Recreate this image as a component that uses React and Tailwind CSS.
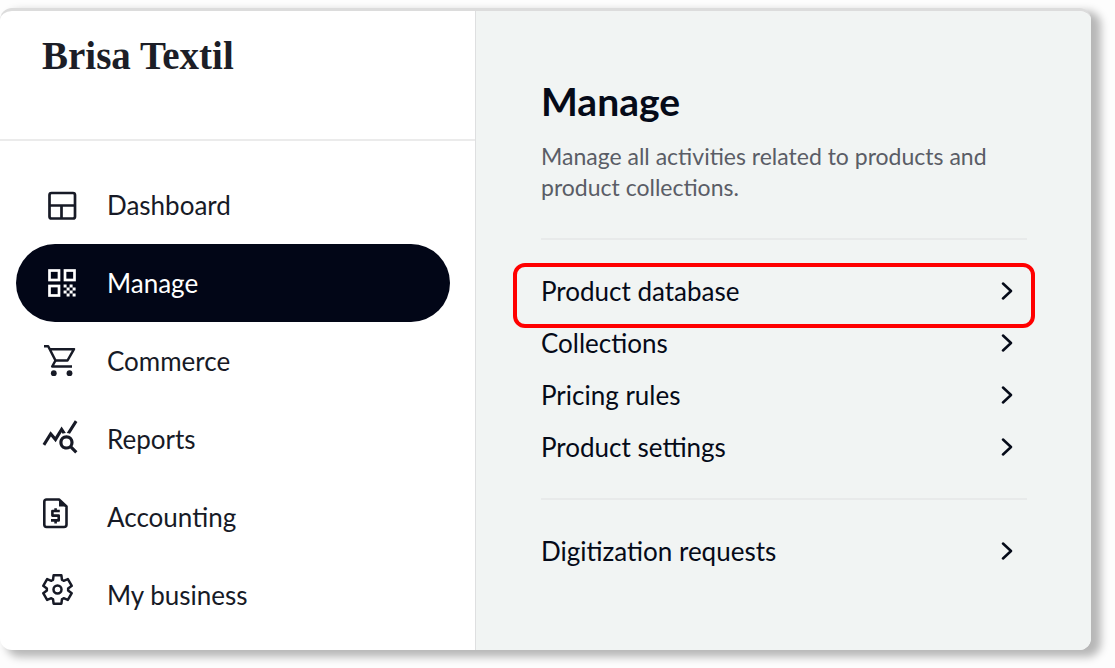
import React, { useState } from "react";
import { MdQueryStats } from "react-icons/md";

const DashboardIcon = () => (
  <g fill="none" stroke="currentColor" strokeWidth="2.7">
    <rect x="9.5" y="8" width="25.5" height="25.5" rx="2" />
    <path d="M9.5 20.5H35M21.5 20.5V33.5" />
  </g>
);

const ManageIcon = () => (
  <g>
    <g fill="none" stroke="currentColor" strokeWidth="2.7">
      <rect x="9.5" y="7.5" width="9.5" height="9.5" />
      <rect x="25" y="7.5" width="9.5" height="9.5" />
      <rect x="9.5" y="23" width="9.5" height="9.5" />
    </g>
    <path
      fill="currentColor"
      d="M23.6 21.6h3v3h-3zM29.6 21.6h3v3h-3zM26.6 24.6h3v3h-3zM32.6 24.6h3v3h-3zM23.6 27.6h3v3h-3zM29.6 27.6h3v3h-3zM26.6 30.6h3v3h-3zM32.6 30.6h3v3h-3z"
    />
  </g>
);

const CommerceIcon = () => (
  <g fill="none" stroke="currentColor" strokeWidth="2.5" strokeLinejoin="round">
    <path d="M4 5.2H8.2L15.5 19.5H27.5L34 8.2H9.8" />
    <path d="M15.5 19.5L12.2 25.5H32" />
    <circle cx="13.8" cy="32.2" r="2.9" fill="currentColor" stroke="none" />
    <circle cx="29.5" cy="32.2" r="2.9" fill="currentColor" stroke="none" />
  </g>
);

const ReportsIcon = () => <MdQueryStats x="1" y="-2" size="38" />;

const AccountingIcon = () => (
  <g fill="none" stroke="currentColor" strokeWidth="2.6" strokeLinejoin="round">
    <path d="M6.5 2.5H19L26.5 9.5V27.5Q26.5 30 24 30H6.5Q4.3 30 4.3 27.5V4.7Q4.3 2.5 6.5 2.5Z" />
    <path d="M19 2.5V9.5H26.5Z" fill="currentColor" stroke="none" />
    <path d="M19.8 14H12.4V18.6H18.7V23.4H11M15.6 11.2V14M15.6 23.4V26.4" />
  </g>
);

const BusinessIcon = () => (
  <g fill="none" stroke="currentColor" strokeLinejoin="round">
    <path
      transform="translate(17.5 14.5) scale(.0355) translate(-480 480)"
      strokeWidth="70"
      d="m370-80-16-128q-13-5-24.5-12T307-235l-119 50L78-375l103-78q-1-7-1-13.5v-27q0-6.5 1-13.5L78-585l110-190 119 50q11-8 23-15t24-12l16-128h220l16 128q13 5 24.5 12t22.5 15l119-50 110 190-103 78q1 7 1 13.5v27q0 6.5-2 13.5l103 78-110 190-118-50q-11 8-23 15t-24 12L590-80H370Z"
    />
    <circle cx="17.5" cy="14.5" r="4" strokeWidth="2.5" />
  </g>
);

const navItems = [
  { label: "Dashboard", icon: DashboardIcon },
  { label: "Manage", icon: ManageIcon },
  { label: "Commerce", icon: CommerceIcon },
  { label: "Reports", icon: ReportsIcon },
  { label: "Accounting", icon: AccountingIcon },
  { label: "My business", icon: BusinessIcon },
];

const productLinks = [
  { label: "Product database", highlighted: true },
  { label: "Collections" },
  { label: "Pricing rules" },
  { label: "Product settings" },
];

const MenuLink = ({ label, highlighted }) => (
  <li className="relative">
    {highlighted && (
      <span className="pointer-events-none absolute -top-0.5 -bottom-[11px] -left-7 -right-2 rounded-xl border-4 border-[#ff0000]" />
    )}
    <a href="#" className="flex h-[52px] items-center justify-between pr-3.5 text-[26px] leading-8">
      {label}
      <svg
        className="h-[18px] w-3"
        viewBox="0 0 12 18"
        fill="none"
        stroke="currentColor"
        strokeWidth="2.5"
        strokeLinecap="round"
        strokeLinejoin="round"
      >
        <path d="M2 1.5L10 9L2 16.5" />
      </svg>
    </a>
  </li>
);

const App = () => {
  const [active, setActive] = useState("Manage");

  return (
    <div className="min-h-screen bg-[#fdfdfd] pt-2 pr-6 pb-[18px] font-[Lato,sans-serif] text-[#050a18]">
      <div className="grid grid-cols-[476px_1fr] overflow-hidden rounded-xl border-t-3 border-[#dcdcdc] bg-white shadow-[8px_5px_8px_2px_rgba(0,0,0,0.28)]">
        {/* SIDEBAR */}
        <aside className="border-r border-[#dedfe0]">
          <div className="h-[130px] border-b-2 border-[#ebebeb] pt-[23px] pl-[42px]">
            <p className="font-['Liberation_Serif',serif] text-[39px] leading-[44px] font-bold text-[#1c1e27]">
              Brisa Textil
            </p>
          </div>
          <nav className="pt-[25px] pr-[25px] pb-4 pl-4">
            {navItems.map(({ label, icon: Icon }) => (
              <button
                key={label}
                type="button"
                onClick={() => setActive(label)}
                className={`flex h-[78px] w-full items-center gap-[27px] rounded-full pl-6 text-left text-[26px] leading-8 ${
                  active === label ? "bg-[#020617] text-white" : "text-[#171a26]"
                }`}
              >
                <svg className="h-10 w-10 overflow-visible" viewBox="0 0 40 40">
                  <Icon />
                </svg>
                {label}
              </button>
            ))}
          </nav>
        </aside>

        {/* MANAGE PANEL */}
        <main className="bg-[#f1f4f3] pt-[66px] pr-16 pl-[65px]">
          <h1 className="text-[39px] leading-[48px] font-bold">Manage</h1>
          <p className="mt-4 text-[23px] leading-[31px] text-[#5a5d66]">
            Manage all activities related to products and product collections.
          </p>
          <ul className="mt-[35px] border-t-2 border-[#e8eaea] py-[25px]">
            {productLinks.map((link) => (
              <MenuLink key={link.label} {...link} />
            ))}
          </ul>
          <ul className="border-t-2 border-[#e8eaea] py-[25px]">
            <MenuLink label="Digitization requests" />
          </ul>
        </main>
      </div>
    </div>
  );
};

export default App;
